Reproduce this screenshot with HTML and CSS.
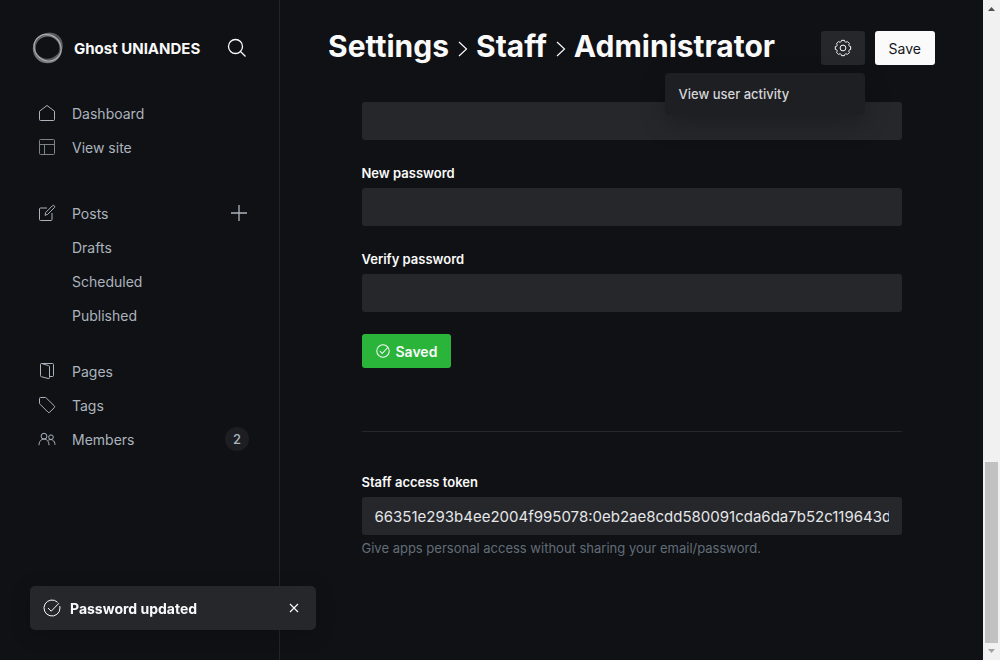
FILE: index.html
```html
<!DOCTYPE html>
<html lang="en">
<head>
<meta charset="utf-8">
<title>Settings - Staff - Administrator</title>
<link rel="stylesheet" href="styles.css">
</head>
<body>
<div class="app">
  <aside class="sidebar">
    <header class="brand">
      <svg class="brand-logo" viewBox="0 0 32 32" fill="none">
        <circle cx="15.500" cy="16.500" r="13.400" stroke="#77787a" stroke-width="2.600"/>
        <ellipse cx="17" cy="15" rx="14" ry="12.600" stroke="#5c5d60" stroke-width="1.800" transform="rotate(-35 16 16)"/>
        <ellipse cx="15.500" cy="16" rx="14" ry="12.800" stroke="#a9aaac" stroke-width="1.200" transform="rotate(40 16 16)"/>
      </svg>
      <span class="brand-name">Ghost UNIANDES</span>
      <button class="icon-button" type="button" aria-label="Search">
        <svg class="icon-search" viewBox="0 0 20 20"><circle cx="8.5" cy="8.5" r="7"/><path d="M13.5 13.5l5 5"/></svg>
      </button>
    </header>
    <nav class="nav" aria-label="Main">
      <ul class="nav-group">
        <li class="nav-row"><a class="nav-link" href="#"><svg class="nav-icon" viewBox="0 0 18 18"><path d="M1.5 7.2v8.3a1 1 0 0 0 1 1h13a1 1 0 0 0 1-1V7.2L9 1.5z"/></svg>Dashboard</a></li>
        <li class="nav-row"><a class="nav-link" href="#"><svg class="nav-icon nav-icon-dim" viewBox="0 0 18 18"><rect x="1.5" y="1.5" width="15" height="15" rx="1"/><path d="M1.5 6.5h15M6.5 6.5v10"/></svg>View site</a></li>
      </ul>
      <ul class="nav-group">
        <li class="nav-row"><a class="nav-link" href="#"><svg class="nav-icon" viewBox="0 0 18 18"><path d="M9 4H2.500a1 1 0 0 0-1 1v10.500a1 1 0 0 0 1 1H13a1 1 0 0 0 1-1V9M7 11.300l.7-2.800 6.700-6.700a1.300 1.300 0 0 1 1.900 1.900L9.600 10.400z"/></svg>Posts</a>
          <button class="icon-button" type="button" aria-label="New post"><svg class="icon-plus" viewBox="0 0 18 18"><path d="M9 1v16M1 9h16"/></svg></button></li>
        <li class="nav-row"><a class="nav-link nav-sub" href="#">Drafts</a></li>
        <li class="nav-row"><a class="nav-link nav-sub" href="#">Scheduled</a></li>
        <li class="nav-row"><a class="nav-link nav-sub" href="#">Published</a></li>
      </ul>
      <ul class="nav-group">
        <li class="nav-row"><a class="nav-link" href="#"><svg class="nav-icon" viewBox="0 0 18 18"><path d="M2.500 2.300v11.400a1 1 0 0 0 .8 1l6.900 1.800a1 1 0 0 0 1.300-1V4.700a1 1 0 0 0-.8-1L3.700 1.500a1 1 0 0 0-1.200.8zM3.500 1.500h11a1 1 0 0 1 1 1v11a1 1 0 0 1-1 1h-3"/></svg>Pages</a></li>
        <li class="nav-row"><a class="nav-link" href="#"><svg class="nav-icon" viewBox="0 0 18 18"><path d="M1.500 2.500v4.600c0 .4.200.8.500 1.100l8 8a1.200 1.200 0 0 0 1.700 0l4.600-4.600a1.200 1.200 0 0 0 0-1.700L8.300 2c-.3-.3-.7-.5-1.100-.5H2.500a1 1 0 0 0-1 1z"/></svg>Tags</a></li>
        <li class="nav-row"><a class="nav-link" href="#"><svg class="nav-icon" viewBox="0 0 18 18"><circle cx="6" cy="6.200" r="2.900"/><path d="M1 15.200c0-3.600 2-6.100 5-6.100s5 2.500 5 6.100"/><circle cx="13" cy="7.200" r="2.300"/><path d="M10.300 10.200c3-1.700 6.700.2 6.700 4.600"/></svg>Members</a>
          <span class="badge">2</span></li>
      </ul>
    </nav>
  </aside>

  <main class="main">
    <header class="page-header">
      <h1 class="breadcrumb">
        <a class="crumb" href="#">Settings</a>
        <svg class="crumb-arrow" viewBox="0 0 10 16"><path d="M1 1l7.500 7L1 15"/></svg>
        <a class="crumb" href="#">Staff</a>
        <svg class="crumb-arrow" viewBox="0 0 10 16"><path d="M1 1l7.500 7L1 15"/></svg>
        <span class="crumb">Administrator</span>
      </h1>
      <div class="actions">
        <div class="menu-anchor">
          <button class="button button-dark" type="button" aria-label="User actions" aria-expanded="true">
            <svg class="icon-gear" viewBox="0 0 18 18"><circle cx="9" cy="9" r="2.900"/><path d="M7.510 1.340H10.490Q10.910 4.380 13.360 2.530L15.470 4.640Q13.620 7.090 16.660 7.510V10.490Q13.620 10.910 15.470 13.360L13.360 15.470Q10.910 13.620 10.490 16.660H7.510Q7.090 13.620 4.640 15.470L2.530 13.360Q4.380 10.910 1.340 10.490V7.510Q4.380 7.090 2.530 4.640L4.640 2.530Q7.090 4.380 7.510 1.340Z"/></svg>
          </button>
          <ul class="menu"><li><a class="menu-link" href="#">View user activity</a></li></ul>
        </div>
        <button class="button button-light" type="button">Save</button>
      </div>
    </header>

    <form class="form">
      <input class="input" type="password" aria-label="Old password">
      <div class="field">
        <label class="label" for="new-password">New password</label>
        <input class="input" id="new-password" type="password">
      </div>
      <div class="field">
        <label class="label" for="verify-password">Verify password</label>
        <input class="input" id="verify-password" type="password">
      </div>
      <button class="button button-green" type="button">
        <svg class="icon-saved" viewBox="0 0 18 18"><path d="M5 9.200l3 3 7.300-8"/><circle cx="9" cy="9" r="8"/></svg>Saved
      </button>
      <hr class="divider">
      <div class="token">
        <label class="label" for="token">Staff access token</label>
        <input class="input" id="token" type="text" readonly value="66351e293b4ee2004f995078:0eb2ae8cdd580091cda6da7b52c119643dd" aria-describedby="token-help">
        <p class="help" id="token-help">Give apps personal access without sharing your email/password.</p>
      </div>
    </form>
  </main>

  <div class="scrollbar" aria-hidden="true">
    <svg class="scroll-arrow scroll-arrow-up" viewBox="0 0 17 17"><path d="M5 11l3.500-4L12 11z"/></svg>
    <div class="scroll-thumb"></div>
    <svg class="scroll-arrow" viewBox="0 0 17 17"><path d="M5 6l3.500 4L12 6z"/></svg>
  </div>

  <div class="toast" role="status">
    <svg class="icon-toast" viewBox="0 0 18 18"><path d="M5 9l3.200 3.200L16 4.200"/><path d="M14.600 3.300A8 8 0 1 0 17 9c0-.8-.1-1.400-.3-2"/></svg>
    <span class="toast-text">Password updated</span>
    <button class="icon-button" type="button" aria-label="Close"><svg class="icon-close" viewBox="0 0 10 10"><path d="M1 1l8 8M9 1L1 9"/></svg></button>
  </div>
</div>
</body>
</html>
```
FILE: styles.css
```css
* { box-sizing: border-box; }

body {
  margin: 0;
  background: #101114;
  color: #fafafb;
  font-family: Inter, "Liberation Sans", sans-serif;
  font-size: 14px;
}

ul { margin: 0; padding: 0; list-style: none; }
a { color: inherit; text-decoration: none; }
svg { display: block; flex: none; fill: none; stroke: currentColor; }
button, input { font: inherit; color: inherit; border: 0; }

.app {
  display: grid;
  grid-template-columns: 280px minmax(0, 1fr) 17px;
  min-height: 100vh;
}

/* Sidebar */
.sidebar { border-right: 1px solid #222427; padding: 32px 30px; }
.brand { display: flex; align-items: center; height: 32px; padding-left: 2px; }
.brand-logo { width: 32px; height: 32px; margin-right: 10px; }
.brand-name { flex: 1; font-size: 15px; font-weight: 700; white-space: nowrap; }
.icon-button { display: flex; padding: 0; background: none; cursor: pointer; }
.icon-search { width: 20px; height: 20px; margin-right: 2px; stroke-width: 1.3; }

.nav { display: grid; gap: 32px; padding-top: 32px; color: #abb4be; }
.nav-group + .nav-group + .nav-group { margin-top: -10px; }
.nav-row { display: flex; align-items: center; height: 34px; }
.nav-link { display: flex; flex: 1; align-items: center; gap: 16px; padding-left: 8px; font-size: 14px; }
.nav-sub { padding-left: 42px; }
.nav-icon { width: 18px; height: 18px; stroke-width: 1; }
.nav-icon-dim { opacity: 0.7; }
.icon-plus { width: 18px; height: 18px; margin-right: 1px; stroke-width: 1.3; }
.badge {
  min-width: 24px;
  border-radius: 12px;
  background: #1d1e22;
  font-size: 13px;
  font-weight: 500;
  line-height: 24px;
  text-align: center;
}

/* Page header */
.main { padding: 24px 48px; }
.page-header { display: flex; align-items: center; justify-content: space-between; height: 48px; }
.breadcrumb { display: flex; align-items: center; margin: 0; padding-bottom: 4px; font-size: 30px; font-weight: 700; line-height: 40px; white-space: nowrap; }
.crumb-arrow { width: 10px; height: 16px; margin: 6px 8px 0 9px; stroke-width: 1.2; }
.actions { display: flex; gap: 10px; }
.button { display: flex; align-items: center; height: 34px; padding: 0 14px; border-radius: 3px; cursor: pointer; }
.button-dark { padding: 0 13px; background: #26272b; }
.button-light { background: #fafafb; color: #15171a; }
.button-green { gap: 6px; background: #2ab43a; font-weight: 600; }
.icon-gear { width: 18px; height: 18px; stroke-width: 1; stroke-linejoin: round; }
.icon-saved { width: 14px; height: 14px; stroke-width: 1.3; }

.menu-anchor { position: relative; }
.menu {
  position: absolute;
  top: 42px;
  right: 0;
  width: 200px;
  padding: 4px 0;
  border-radius: 4px;
  background: #1e1f23;
  box-shadow: 0 8px 24px rgba(0, 0, 0, 0.25);
}
.menu-link { display: block; padding: 0 14px; color: #d5d6d8; font-size: 13px; font-weight: 500; line-height: 34px; }

/* Form */
.form { max-width: 540px; margin: 30px auto 0; }
.field { margin: 24px 0 22px; }
.label { display: block; margin-bottom: 5px; font-size: 13px; font-weight: 600; line-height: 19px; }
.input {
  display: block;
  width: 100%;
  height: 38px;
  padding: 0 13px;
  border-radius: 3px;
  outline: 0;
  background: #26272b;
  color: #e5e6e8;
  font-size: 15px;
}
.divider { height: 1px; margin: 63px 0 41px; border: 0; background: #26272b; }
.help { margin: 3px 0 0; color: #626d79; font-size: 13px; line-height: 20px; }

/* Scrollbar */
.scrollbar { display: flex; flex-direction: column; background: #f1f1f1; }
.scroll-arrow { width: 17px; height: 17px; stroke: none; fill: #a3a3a3; }
.scroll-arrow-up { fill: #505050; }
.scroll-thumb { height: 181px; margin: auto 2px 0; background: #c1c1c1; }

/* Toast */
.toast {
  position: fixed;
  left: 30px;
  bottom: 30px;
  display: flex;
  align-items: center;
  width: 286px;
  height: 44px;
  padding: 0 17px 0 13px;
  border-radius: 5px;
  background: #26272b;
  box-shadow: 0 4px 20px rgba(0, 0, 0, 0.2);
}
.icon-toast { width: 18px; height: 18px; margin-right: 9px; stroke-width: 1; }
.toast-text { flex: 1; font-weight: 700; }
.icon-close { width: 10px; height: 10px; stroke-width: 1.2; }
```
